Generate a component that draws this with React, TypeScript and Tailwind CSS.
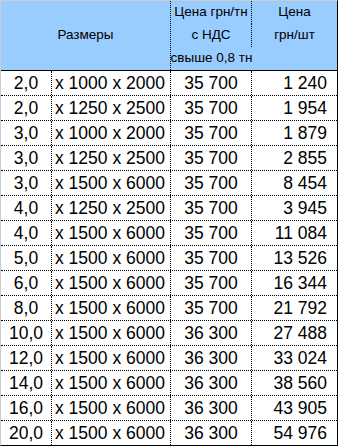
const rows: [string, string, string, string][] = [
    ["2,0", "x 1000 x 2000", "35 700", "1 240"],
    ["2,0", "x 1250 x 2500", "35 700", "1 954"],
    ["3,0", "x 1000 x 2000", "35 700", "1 879"],
    ["3,0", "x 1250 x 2500", "35 700", "2 855"],
    ["3,0", "x 1500 x 6000", "35 700", "8 454"],
    ["4,0", "x 1250 x 2500", "35 700", "3 945"],
    ["4,0", "x 1500 x 6000", "35 700", "11 084"],
    ["5,0", "x 1500 x 6000", "35 700", "13 526"],
    ["6,0", "x 1500 x 6000", "35 700", "16 344"],
    ["8,0", "x 1500 x 6000", "35 700", "21 792"],
    ["10,0", "x 1500 x 6000", "36 300", "27 488"],
    ["12,0", "x 1500 x 6000", "36 300", "33 024"],
    ["14,0", "x 1500 x 6000", "36 300", "38 560"],
    ["16,0", "x 1500 x 6000", "36 300", "43 905"],
    ["20,0", "x 1500 x 6000", "36 300", "54 976"],
];

export default function App() {
    return (
        <div
            className="w-[338px] h-[446px] border-l border-t border-l-[#cccccc] border-t-[#cccccc] border-r border-b border-r-black border-b-black bg-white text-black"
            style={{ fontFamily: '"Liberation Sans", Arial, sans-serif' }}
        >
            <PriceHeader />
            {rows.map((row, index) => (
                <PriceRow key={index} row={row} last={index === rows.length - 1} />
            ))}
        </div>
    );
}

function PriceHeader() {
    return (
        <div className="flex h-[70px] border-b border-black bg-[#99ccff] text-[13.5px]">
            <div className="flex w-[170px] items-center justify-center border-r border-dotted border-black">
                Размеры
            </div>
            <div className="flex flex-1 flex-col">
                <HeaderLine left="Цена грн/тн" right="Цена" divider />
                <HeaderLine left="с НДС" right="грн/шт" divider />
                <HeaderLine left="свыше 0,8 тн" right="" />
            </div>
        </div>
    );
}

function HeaderLine({
    left,
    right,
    divider = false,
}: {
    left: string;
    right: string;
    divider?: boolean;
}) {
    return (
        <div className="flex h-[23px]">
            <div
                className={
                    divider
                        ? "flex w-[81px] items-center justify-center whitespace-nowrap border-r border-dotted border-black"
                        : "flex w-[81px] items-center justify-center whitespace-nowrap"
                }
            >
                {left}
            </div>
            <div className="flex flex-1 items-center justify-center">{right}</div>
        </div>
    );
}

function PriceRow({
    row,
    last,
}: {
    row: [string, string, string, string];
    last: boolean;
}) {
    const [thickness, size, pricePerTon, pricePerPiece] = row;

    return (
        <div
            className={
                last
                    ? "flex h-[24px] text-[17.5px] leading-[24px]"
                    : "flex h-[25px] border-b border-dotted border-black text-[17.5px] leading-[24px]"
            }
        >
            <div className="w-[51px] border-r border-dotted border-black text-center">
                {thickness}
            </div>
            <div className="w-[119px] border-r border-dotted border-black pl-[3px] whitespace-nowrap">
                {size}
            </div>
            <div className="w-[81px] border-r border-dotted border-black text-center">
                {pricePerTon}
            </div>
            <div className="flex-1 pr-[10px] text-right">{pricePerPiece}</div>
        </div>
    );
}
